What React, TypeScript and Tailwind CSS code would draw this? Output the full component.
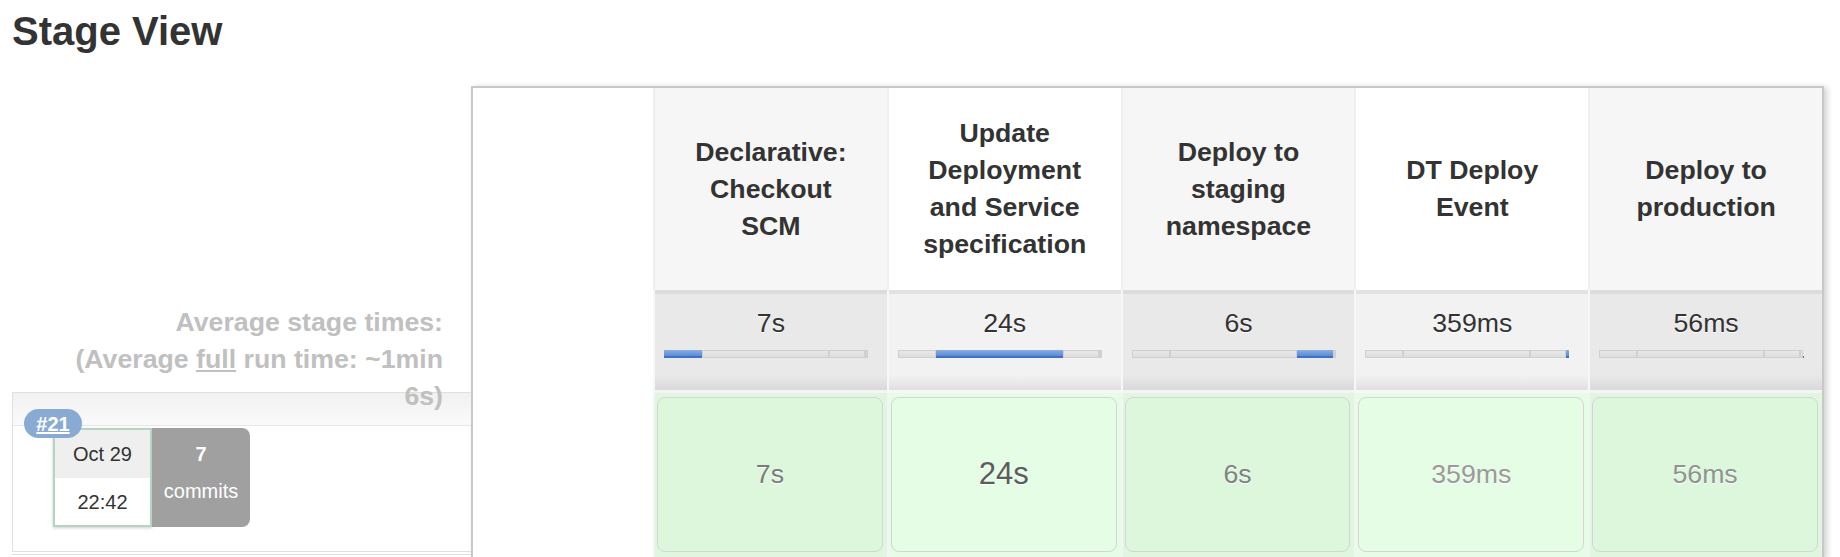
import React from "react";

type Stage = {
  name: string;
  avg: string;
  frac: number;
  cell: string;
  cellText: string;
  odd: boolean;
};

const stages: Stage[] = [
  { name: "Declarative: Checkout SCM", avg: "7s", frac: 18.6, cell: "7s", cellText: "text-[26.7px] text-[#7b7b7b]", odd: true },
  { name: "Update Deployment and Service specification", avg: "24s", frac: 62.3, cell: "24s", cellText: "text-[31px] text-[#5c5c5c]", odd: false },
  { name: "Deploy to staging namespace", avg: "6s", frac: 17.6, cell: "6s", cellText: "text-[26.7px] text-[#7e847e]", odd: true },
  { name: "DT Deploy Event", avg: "359ms", frac: 1.2, cell: "359ms", cellText: "text-[26.7px] text-[#9a9a9a]", odd: false },
  { name: "Deploy to production", avg: "56ms", frac: 0.3, cell: "56ms", cellText: "text-[26.7px] text-[#8e948e]", odd: true },
];

function Bar({ active }: { active: number }) {
  return (
    <div className="ml-[9px] mt-[8px] flex h-[8px] w-[204px]">
      {stages.map((s, i) => (
        <div
          key={i}
          style={{ width: `${s.frac}%` }}
          className={
            i === active
              ? "h-full bg-[linear-gradient(to_bottom,#8aaedf,#5a8bd4)] border-b-2 border-[#3d72c8]"
              : "h-full bg-[linear-gradient(to_bottom,#e9e9e9,#dcdcdc)] shadow-[inset_0_0_0_1px_#d0d0d0]"
          }
        />
      ))}
    </div>
  );
}

export default function App() {
  return (
    <div className="min-h-[557px] bg-white font-['Liberation_Sans',Arial,sans-serif] text-[#333]">
      <h1 className="pl-[12px] pt-[11px] text-[40px] font-bold leading-[40px] text-[#333]">Stage View</h1>

      <div className="mt-[35px] flex">
        {/* left panel */}
        <div className="flex w-[471px] shrink-0 flex-col">
          <div className="h-[204px]" />
          <div className="relative z-10 h-[102px] pl-[40px] pr-[28px] pt-[14px] text-right text-[26.7px] font-bold leading-[37px] text-[#c0c0c0]">
            Average stage times:
            <br />
            (Average <span className="underline">full</span> run time: ~1min 6s)
          </div>
          <div className="relative ml-[12px] h-[160px] border border-r-0 border-[#e0e0e0]">
            <div className="h-[33px] border-b border-[#e6e6e6] bg-[linear-gradient(to_bottom,#f1f1f1,#fafafa)]" />
            <div className="ml-[40px] mt-[2px] flex">
              <div className="flex w-[99px] flex-col border-2 border-[#b3d5c1] shadow-[0_1px_3px_rgba(0,0,0,0.2)]">
                <div className="flex h-[48px] items-center justify-center bg-[#efefef] text-[20px]">Oct 29</div>
                <div className="flex h-[47px] items-center justify-center bg-white text-[20px]">22:42</div>
              </div>
              <div className="flex h-[99px] w-[98px] flex-col items-center rounded-r-[8px] bg-[#a0a0a0] pt-[8px] text-[20px] leading-[37px] text-white">
                <span className="font-bold">7</span>
                <span>commits</span>
              </div>
            </div>
            <div className="absolute left-[11px] top-[16px] z-20 flex h-[29px] w-[58px] items-center justify-center rounded-full bg-[#89abd3] text-[20px] font-bold text-white underline">
              #21
            </div>
          </div>
          <div className="ml-[12px] mt-[2px] border-t border-[#e0e0e0]" />
        </div>

        {/* table */}
        <div className="w-[1353px] shrink-0 border-2 border-[#c8c8c8] shadow-[3px_1px_6px_rgba(0,0,0,0.18)]">
          <div className="grid grid-cols-[180px_repeat(5,1fr)]">
            {/* header row */}
            <div className="h-[202px] bg-white" />
            {stages.map((s, i) => (
              <div
                key={"h" + i}
                className={
                  "flex h-[202px] items-center justify-center border-l-2 border-[#efefef] px-[26px] text-center text-[26.7px] font-bold leading-[37px] text-[#333] " +
                  (s.odd ? "bg-[#f6f6f6]" : "bg-white")
                }
              >
                {s.name}
              </div>
            ))}

            {/* average row */}
            <div className="h-[103px] bg-white" />
            {stages.map((s, i) => (
              <div
                key={"a" + i}
                className={
                  "h-[103px] border-l-2 border-[#f7f7f7] " +
                  (s.odd
                    ? "bg-[linear-gradient(to_bottom,#dcdcdc_0,#dcdcdc_4px,#e9e9e9_4px,#e9e9e9_85px,#d9d9d9_100px,#f4f4f4_100px)]"
                    : "bg-[linear-gradient(to_bottom,#e2e2e2_0,#e2e2e2_4px,#f2f2f2_4px,#f2f2f2_85px,#e0e0e0_100px,#f7f7f7_100px)]")
                }
              >
                <div className="pt-[15px] text-center text-[26.7px] leading-[37px] text-[#333] [text-shadow:0_1px_0_#fff]">
                  {s.avg}
                </div>
                <Bar active={i} />
              </div>
            ))}

            {/* body row */}
            <div className="h-[164px] bg-white" />
            {stages.map((s, i) => (
              <div
                key={"b" + i}
                className={
                  "h-[164px] border-l-2 border-[#f0f6f0] pb-[4px] pl-[2px] pr-[4px] pt-[4px] " +
                  (s.odd ? "bg-[#e0f6e0]" : "bg-[#e6fce6]")
                }
              >
                <div
                  className={
                    "flex h-[155px] items-center justify-center rounded-[8px] border border-[#d3d6d3] [text-shadow:0_1px_0_#fff] " +
                    (s.odd ? "bg-[#ddf7dd]" : "bg-[#e4fde4]") +
                    " " +
                    s.cellText
                  }
                >
                  {s.cell}
                </div>
              </div>
            ))}
          </div>
        </div>
      </div>
    </div>
  );
}
